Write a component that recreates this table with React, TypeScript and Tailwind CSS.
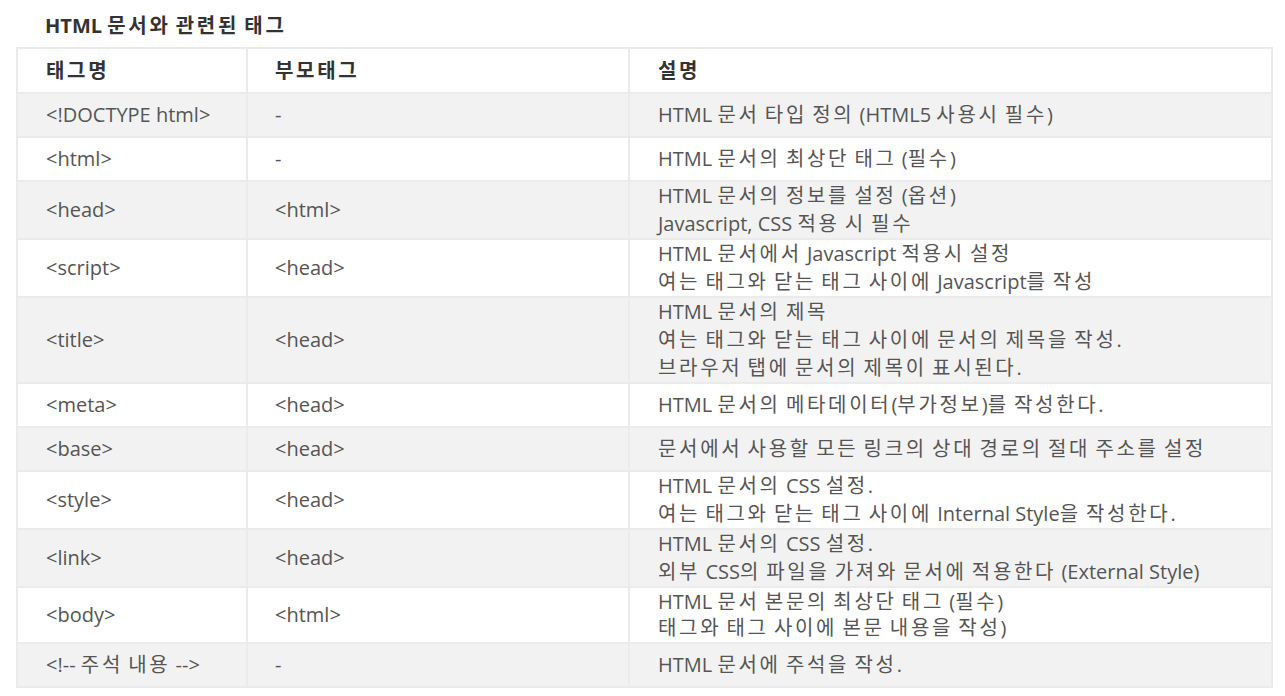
import { Fragment } from 'react'

const rows: [string, string, string[]][] = [
  ['<!DOCTYPE html>', '-', ['HTML 문서 타입 정의 (HTML5 사용시 필수)']],
  ['<html>', '-', ['HTML 문서의 최상단 태그 (필수)']],
  ['<head>', '<html>', ['HTML 문서의 정보를 설정 (옵션)', 'Javascript, CSS 적용 시 필수']],
  ['<script>', '<head>', ['HTML 문서에서 Javascript 적용시 설정', '여는 태그와 닫는 태그 사이에 Javascript를 작성']],
  [
    '<title>',
    '<head>',
    ['HTML 문서의 제목', '여는 태그와 닫는 태그 사이에 문서의 제목을 작성.', '브라우저 탭에 문서의 제목이 표시된다.']
  ],
  ['<meta>', '<head>', ['HTML 문서의 메타데이터(부가정보)를 작성한다.']],
  ['<base>', '<head>', ['문서에서 사용할 모든 링크의 상대 경로의 절대 주소를 설정']],
  ['<style>', '<head>', ['HTML 문서의 CSS 설정.', '여는 태그와 닫는 태그 사이에 Internal Style을 작성한다.']],
  ['<link>', '<head>', ['HTML 문서의 CSS 설정.', '외부 CSS의 파일을 가져와 문서에 적용한다 (External Style)']],
  ['<body>', '<html>', ['HTML 문서 본문의 최상단 태그 (필수)', '태그와 태그 사이에 본문 내용을 작성)']],
  ['<!-- 주석 내용 -->', '-', ['HTML 문서에 주석을 작성.']]
]

//** Hangul runs get a bit more spacing, like the original Malgun Gothic */
function Ko({ text }: { text: string }) {
  const parts = text.split(/([\uAC00-\uD7A3]+)/)
  return (
    <>
      {parts.map((p, i) =>
        /[\uAC00-\uD7A3]/.test(p) ? (
          <span key={i} className="tracking-[2.7px]">
            {p}
          </span>
        ) : (
          <Fragment key={i}>{p}</Fragment>
        )
      )}
    </>
  )
}

const cell = 'border-2 border-[#ebebeb] text-left'

export default function App() {
  return (
    <div className="min-h-screen bg-white font-['Open_Sans','Noto_Sans_CJK_KR',sans-serif] text-[20px]">
      <h2 className="pl-[45px] pt-[12px] h-[47px] text-[20px] font-bold text-[#333] leading-[28px]">
        <Ko text="HTML 문서와 관련된 태그" />
      </h2>

      <table className="ml-[16px] w-[1257px] table-fixed border-collapse border-2 border-[#ebebeb]">
        <colgroup>
          <col className="w-[230px]" />
          <col className="w-[382px]" />
          <col />
        </colgroup>
        <thead>
          <tr className="h-[45px] bg-white">
            <th className={`${cell} pl-[28px] font-bold text-[#333]`}>
              <Ko text="태그명" />
            </th>
            <th className={`${cell} pl-[27px] font-bold text-[#333]`}>
              <Ko text="부모태그" />
            </th>
            <th className={`${cell} pl-[28px] font-bold text-[#333]`}>
              <Ko text="설명" />
            </th>
          </tr>
        </thead>
        <tbody>
          {rows.map(([tag, parent, desc], i) => (
            <tr
              key={tag}
              className={`${i % 2 === 0 ? 'bg-[#f2f2f2]' : 'bg-white'} ${i === 9 ? 'h-[56px]' : 'h-[44px]'}`}>
              <td className={`${cell} pl-[28px] text-[#555] leading-[28px]`}>
                <Ko text={tag} />
              </td>
              <td className={`${cell} pl-[27px] text-[#555] leading-[28px]`}>{parent}</td>
              <td className={`${cell} pl-[28px] text-[#555] ${i === 9 ? 'leading-[26px]' : 'leading-[28px]'}`}>
                {desc.map((line) => (
                  <div key={line}>
                    <Ko text={line} />
                  </div>
                ))}
              </td>
            </tr>
          ))}
        </tbody>
      </table>
    </div>
  )
}
